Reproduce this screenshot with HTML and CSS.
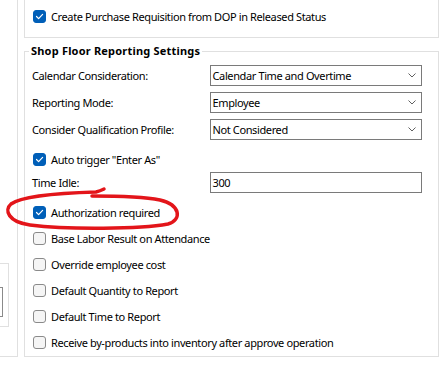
FILE: index.html
```html
<!DOCTYPE html>
<html lang="en">
<head>
    <meta charset="UTF-8">
    <meta name="viewport" content="width=device-width, initial-scale=1.0">
    <title>Shop Floor Reporting Settings</title>
    <link rel="stylesheet" href="styles.css">
</head>
<body>
    <div class="page">
        <div class="side">
            <div class="side-box">
                <div class="side-input"></div>
            </div>
        </div>

        <div class="main">
            <div class="group-top">
                <label class="check-row">
                    <span class="box checked"><svg width="11" height="11" viewBox="0 0 11 11"><polyline points="2.5,5.5 4.6,7.6 8.6,3.4" /></svg></span>
                    Create Purchase Requisition from DOP in Released Status
                </label>
            </div>

            <fieldset class="settings">
                <legend>Shop Floor Reporting Settings</legend>

                <div class="field-row">
                    <span class="label">Calendar Consideration:</span>
                    <div class="select">Calendar Time and Overtime<svg class="chevron" width="8" height="5" viewBox="0 0 8 5"><polyline points="0.5,0.5 4,4 7.5,0.5" /></svg></div>
                </div>
                <div class="field-row">
                    <span class="label">Reporting Mode:</span>
                    <div class="select">Employee<svg class="chevron" width="8" height="5" viewBox="0 0 8 5"><polyline points="0.5,0.5 4,4 7.5,0.5" /></svg></div>
                </div>
                <div class="field-row">
                    <span class="label">Consider Qualification Profile:</span>
                    <div class="select">Not Considered<svg class="chevron" width="8" height="5" viewBox="0 0 8 5"><polyline points="0.5,0.5 4,4 7.5,0.5" /></svg></div>
                </div>

                <label class="check-row">
                    <span class="box checked"><svg width="11" height="11" viewBox="0 0 11 11"><polyline points="2.5,5.5 4.6,7.6 8.6,3.4" /></svg></span>
                    Auto trigger "Enter As"
                </label>

                <div class="field-row">
                    <span class="label">Time Idle:</span>
                    <div class="select">300</div>
                </div>

                <label class="check-row">
                    <span class="box checked"><svg width="11" height="11" viewBox="0 0 11 11"><polyline points="2.5,5.5 4.6,7.6 8.6,3.4" /></svg></span>
                    Authorization required
                </label>
                <label class="check-row"><span class="box"></span>Base Labor Result on Attendance</label>
                <label class="check-row"><span class="box"></span>Override employee cost</label>
                <label class="check-row"><span class="box"></span>Default Quantity to Report</label>
                <label class="check-row"><span class="box"></span>Default Time to Report</label>
                <label class="check-row"><span class="box"></span>Receive by-products into inventory after approve operation</label>
            </fieldset>
        </div>

        <!-- red marker drawn over the screenshot -->
        <svg class="annotation" width="439" height="373" viewBox="0 0 439 373">
            <path d="M 104 189 C 102 190 100 191 96 192 C 60 193 22 196 11 204 C 4 210 8 222 30 225 C 70 230 140 229 168 224 C 182 220 181 205 160 200 C 140 196 115 196 92 196" />
        </svg>
    </div>
</body>
</html>
```

FILE: styles.css
```css
* {
    box-sizing: border-box;
}

body {
    margin: 0;
    font-family: "Noto Sans", sans-serif;
    font-size: 11px;
    letter-spacing: -0.38px;
    color: #000;
    background-color: #fff;
}

.page {
    position: relative;
    display: flex;
    width: 439px;
    height: 373px;
    overflow: hidden;
}

.side {
    flex: none;
    width: 18px;
    height: 357px;
    border-right: 1px solid #e0e0e0;
    border-bottom: 1px solid #e0e0e0;
}

.side-box {
    margin-top: 263px;
    width: 9px;
    height: 64px;
    border: 1px solid #e0e0e0;
    border-left: none;
}

.side-input {
    margin-top: 23px;
    width: 3px;
    height: 30px;
    border: 1px solid #8a8a8a;
    border-left: none;
}

.main {
    flex: none;
    margin-left: 6px;
    width: 415px;
}

.group-top {
    height: 38px;
    padding: 10px 0 0 8px;
    border: 1px solid #e0e0e0;
    border-top: none;
}

.group-top .check-row {
    height: 13px;
    padding-left: 0;
}

.settings {
    margin: 5px 0 0 0;
    padding: 0 16px 1px 7px;
    min-inline-size: 0;
    border: 1px solid #e0e0e0;
}

.settings legend {
    margin-left: -3px;
    padding: 0 2px;
    font-weight: bold;
    letter-spacing: 0.2px;
    line-height: 16px;
}

.settings legend + .field-row {
    margin-top: 6px;
}

.field-row {
    display: flex;
    align-items: center;
    height: 21px;
    margin-bottom: 6px;
}

.label {
    width: 178px;
}

.select {
    display: flex;
    align-items: center;
    justify-content: space-between;
    width: 213px;
    height: 21px;
    padding: 0 5px 0 2px;
    border: 1px solid #7a7a7a;
    background-color: #fff;
}

.chevron polyline {
    fill: none;
    stroke: #606060;
    stroke-width: 1;
}

.check-row {
    display: flex;
    align-items: center;
    gap: 5px;
    height: 26px;
    padding-left: 1px;
}

.box {
    flex: none;
    display: flex;
    width: 13px;
    height: 13px;
    border: 1px solid #8a8a8a;
    border-radius: 3px;
    background-color: #f5f5f5;
}

.box.checked {
    border-color: #005fb8;
    background-color: #005fb8;
}

.box polyline {
    fill: none;
    stroke: #fff;
    stroke-width: 1.2;
    stroke-linecap: round;
    stroke-linejoin: round;
}

.annotation {
    position: absolute;
    top: 0;
    left: 0;
    pointer-events: none;
}

.annotation path {
    fill: none;
    stroke: #e3151a;
    stroke-width: 3.5;
    stroke-linecap: round;
}
```
